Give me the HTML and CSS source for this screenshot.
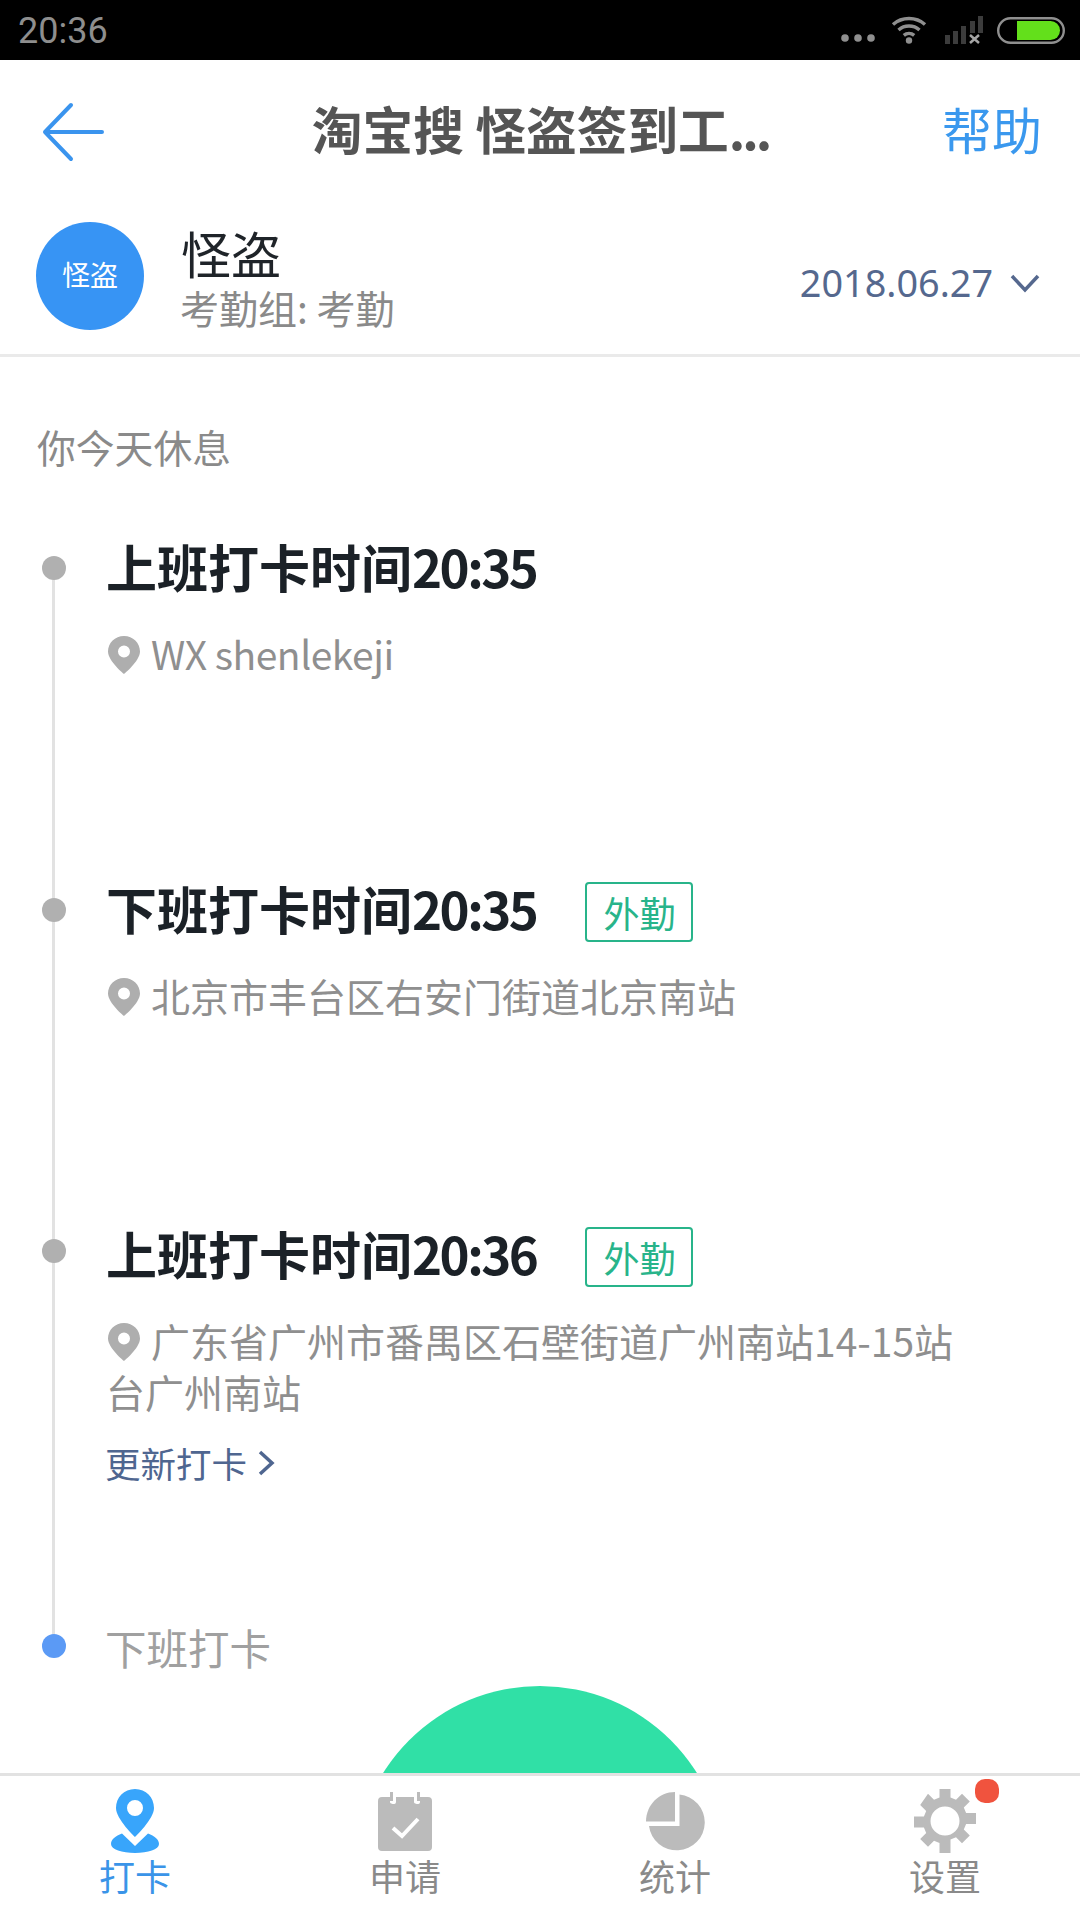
FILE: index.html
```html
<!DOCTYPE html>
<html lang="zh-CN">
<head>
<meta charset="utf-8">
<title>打卡</title>
<link rel="stylesheet" href="styles.css">
</head>
<body>
<div class="page">
  <div class="status">
    <span class="clock">20:36</span>
    <div class="status-icons">
      <svg class="s-dots" width="34" height="10" viewBox="0 0 34 10"><circle cx="4" cy="5" r="3.8"/><circle cx="17" cy="5" r="3.8"/><circle cx="30" cy="5" r="3.8"/></svg>
      <svg class="s-wifi" width="36" height="29" viewBox="0 0 36 29"><path class="w" d="M2 9.5C11 1.5 25 1.500 34 9.500M7.500 15C13.500 9.800 22.500 9.800 28.500 15M12.800 20.300C15.800 17.800 20.200 17.800 23.200 20.300"/><circle cx="18" cy="25.500" r="3.200"/></svg>
      <svg class="s-signal" width="38" height="28" viewBox="0 0 38 28"><g class="sig"><rect x="0" y="19" width="5" height="9"/><rect x="8" y="15" width="5" height="13"/><rect x="16" y="10" width="5" height="18"/><rect x="25" y="5" width="5" height="12"/><rect x="33" y="0" width="5" height="17"/></g><path class="x" d="M25 19l9 8M34 19l-9 8"/></svg>
      <svg class="s-batt" width="68" height="27" viewBox="0 0 68 27"><rect class="b-o" x="1.200" y="1.200" width="65.600" height="24.600" rx="12.300"/><path class="b-f" d="M20 4h33.500a9.500 9.500 0 0 1 0 19H20z"/></svg>
    </div>
  </div>

  <header class="nav">
    <svg class="back" width="62" height="60" viewBox="0 0 62 60"><path d="M60 30H3M29 3L3 30l26 27"/></svg>
    <h1 class="nav-title">淘宝搜 怪盗签到工<span class="more">...</span></h1>
    <span class="nav-help">帮助</span>
  </header>

  <section class="profile">
    <div class="avatar"><span>怪盗</span></div>
    <div class="who">
      <div class="name">怪盗</div>
      <div class="group">考勤组: 考勤</div>
    </div>
    <div class="date">
      <span>2018.06.27</span>
      <svg width="30" height="20" viewBox="0 0 30 20"><path d="M2 3l13 14L28 3"/></svg>
    </div>
  </section>

  <main class="main">
    <p class="notice">你今天休息</p>
    <ol class="timeline">
      <li class="entry e1">
        <div class="head"><h2 class="when">上班打卡时间<span class="clk">20:35</span></h2></div>
        <p class="where"><svg class="pin" width="32" height="38" viewBox="0 0 32 38"><path fill-rule="evenodd" d="M16 0C7 0 0 7 0 15.500 0 25 16 38 16 38s16-13 16-22.500C32 7 25 0 16 0zm0 9.500a6 6 0 1 1 0 12 6 6 0 0 1 0-12z"/></svg><span class="latin">WX shenlekeji</span></p>
      </li>
      <li class="entry e2">
        <div class="head"><h2 class="when">下班打卡时间<span class="clk">20:35</span></h2><span class="tag">外勤</span></div>
        <p class="where"><svg class="pin" width="32" height="38" viewBox="0 0 32 38"><path fill-rule="evenodd" d="M16 0C7 0 0 7 0 15.500 0 25 16 38 16 38s16-13 16-22.500C32 7 25 0 16 0zm0 9.500a6 6 0 1 1 0 12 6 6 0 0 1 0-12z"/></svg>北京市丰台区右安门街道北京南站</p>
      </li>
      <li class="entry e3">
        <div class="head"><h2 class="when">上班打卡时间<span class="clk">20:36</span></h2><span class="tag">外勤</span></div>
        <p class="where"><svg class="pin" width="32" height="38" viewBox="0 0 32 38"><path fill-rule="evenodd" d="M16 0C7 0 0 7 0 15.500 0 25 16 38 16 38s16-13 16-22.500C32 7 25 0 16 0zm0 9.500a6 6 0 1 1 0 12 6 6 0 0 1 0-12z"/></svg>广东省广州市番禺区石壁街道广州南站14-15站台广州南站</p>
        <a class="update">更新打卡<svg width="18" height="28" viewBox="0 0 18 28"><path d="M3 3l12 11L3 25"/></svg></a>
      </li>
      <li class="entry e4 pending">
        <div class="head"><span class="todo">下班打卡</span></div>
      </li>
    </ol>
    <div class="punch"></div>
  </main>

  <nav class="tabs">
    <div class="tab active">
      <svg width="48" height="64" viewBox="0 0 48 64"><path fill-rule="evenodd" d="M24 0C13 0 5 8.500 5 19c0 11 19 29 19 29s19-18 19-29C43 8.500 35 0 24 0zm0 11a8 8 0 1 1 0 16 8 8 0 0 1 0-16z"/><path d="M11 44.500C4.500 47 0 50.500 0 55c0 5.500 11 9 24 9s24-3.500 24-9c0-4.500-4.500-8-11-10.500L24 57z"/></svg>
      <span>打卡</span>
    </div>
    <div class="tab">
      <svg width="54" height="60" viewBox="0 0 54 60"><path fill-rule="evenodd" d="M4 6h8v5c0 2 4 2 4 2s2 0 2-2V6h18v5c0 2 4 2 4 2s2 0 2-2V6h8a4 4 0 0 1 4 4v46a4 4 0 0 1-4 4H4a4 4 0 0 1-4-4V10a4 4 0 0 1 4-4z"/><path class="tick" d="M15 37l9 8 16-17"/><path class="pegs" d="M13.500 1v9M40.500 1v9"/></svg>
      <span>申请</span>
    </div>
    <div class="tab">
      <svg width="60" height="60" viewBox="0 0 60 60"><path d="M30 1v29.500H1C1 14 14 1 30 1z"/><path d="M34.500 3.500A28 28 0 1 1 4 35h30.500z"/></svg>
      <span>统计</span>
    </div>
    <div class="tab">
      <svg width="62" height="64" viewBox="0 0 62 64"><path fill-rule="evenodd" d="M25.500 0h11v8.500l5.500 2.300 6-6 7.800 7.800-6 6 2.300 5.400H62v11h-9.900l-2.300 5.500 6 6-7.800 7.800-6-6-5.500 2.300V64h-11v-9.900L20 51.800l-6 6-7.800-7.800 6-6-2.300-5.500H0v-11h9.900l2.300-5.400-6-6L14 4.800l6 6 5.500-2.300zM31 17.500a14.500 14.500 0 1 0 0 29 14.500 14.500 0 0 0 0-29z"/></svg>
      <span>设置</span>
      <i class="badge"></i>
    </div>
  </nav>
</div>
</body>
</html>
```

FILE: styles.css
```css
* { box-sizing: border-box; }
html, body { margin: 0; padding: 0; }
body { background: #fff; font-family: "Noto Sans CJK SC", "Noto Sans", sans-serif; }
.page { width: 1080px; height: 1920px; display: flex; flex-direction: column; overflow: hidden; }

.status { height: 60px; background: #000; display: flex; align-items: center; justify-content: space-between; padding: 0 15px 0 18px; flex: none; }
.clock { font-family: Roboto, sans-serif; font-size: 36px; color: #8e8e8e; line-height: 60px; padding-top: 2px; }
.status-icons { display: flex; align-items: center; height: 60px; position: relative; }
.s-dots { fill: #8f8f8f; margin: 16px 16px 0 0; }
.s-wifi { fill: #8f8f8f; margin: -1px 18px 0 0; }
.s-wifi .w { fill: none; stroke: #8f8f8f; stroke-width: 3.500; }
.s-signal { margin: 0 14px 0 0; }
.s-signal .sig { fill: #3c3c3c; }
.s-signal .x { stroke: #a5a5a5; stroke-width: 2.500; fill: none; }
.s-batt .b-o { fill: none; stroke: #8f8f8f; stroke-width: 2.400; }
.s-batt .b-f { fill: #63e01b; }

.nav { height: 144px; flex: none; display: flex; align-items: center; padding: 0 38px 0 42px; }
.back { fill: none; stroke: #3a94ee; stroke-width: 4; stroke-linecap: round; stroke-linejoin: round; }
.nav-title { flex: 1; margin: 0 0 8px; text-align: center; font-size: 50.700px; line-height: 60px; font-weight: 700; color: #555; padding-left: 35px; white-space: nowrap; }
.more { letter-spacing: -3px; }
.nav-help { font-size: 50px; line-height: 60px; color: #3a98ee; margin-bottom: 8px; }

.profile { height: 153px; flex: none; display: flex; align-items: center; padding: 0 40px 7px 36px; border-bottom: 3px solid #eaeaea; }
.avatar { width: 108px; height: 108px; border-radius: 50%; background: #3794f4; color: #fff; font-size: 28px; line-height: 40px; padding-bottom: 4px; display: flex; align-items: center; justify-content: center; flex: none; }
.who { margin: 2px 0 0 37px; flex: 1; }
.name { font-size: 50px; line-height: 58px; color: #1f2429; }
.group { font-size: 39px; line-height: 46px; color: #8a8a8a; margin-top: 3px; margin-left: -1px; }
.date { display: flex; align-items: center; gap: 17px; color: #55688e; font-size: 37.800px; font-family: "Noto Sans", sans-serif; margin-top: 14px; }
.date svg { fill: none; stroke: #55688e; stroke-width: 3.500; }

.main { flex: 1; position: relative; overflow: hidden; padding: 0 0 0 36px; }
.notice { margin: 0 0 0 1px; padding-top: 61px; font-size: 38.800px; line-height: 56px; color: #8a8a8a; }

.timeline { list-style: none; margin: 0; padding: 0 0 0 71px; position: relative; }
.timeline::before { content: ""; position: absolute; left: 15.500px; top: 35px; bottom: 0; width: 3px; background: #e2e2e2; }
.entry { position: relative; }
.entry::before { content: ""; position: absolute; left: -65px; width: 24px; height: 24px; border-radius: 50%; background: #b0b0b0; }
.entry.pending::before { background: #5b9af5; }
.e1 { margin-top: 60px; height: 342px; }
.e1::before { top: 22px; }
.e2 { height: 345px; }
.e2::before { top: 22px; }
.e3 { height: 394px; }
.e3::before { top: 18px; }
.e4 { height: 30px; }
.e4::before { top: 19px; }
.head { display: flex; align-items: center; height: 64px; }
.when { margin: 0 0 0 -1px; font-size: 51px; line-height: 64px; font-weight: 700; color: #1b2127; }
.clk { letter-spacing: -2.500px; }
.tag { margin: 7px 0 0 49px; width: 108px; height: 60px; border: 2.500px solid #28b48a; border-radius: 4px; color: #28b48a; font-size: 36px; display: flex; align-items: center; justify-content: center; line-height: 1; }
.where { margin: 30px 0 0 -1px; width: 860px; font-size: 39px; line-height: 51px; color: #8f8f8f; }
.latin { letter-spacing: -0.500px; }
.pin { fill: #aeaeae; vertical-align: -4px; margin: 0 11px 0 2px; }
.update { display: flex; align-items: center; gap: 10px; margin: 21px 0 0 -2px; font-size: 35.500px; line-height: 50px; color: #4f6690; }
.update svg { fill: none; stroke: #4f6690; stroke-width: 3.500; }
.todo { font-size: 41.500px; color: #a0a0a0; line-height: 64px; margin-left: -2px; }

.punch { position: absolute; left: 355px; top: 1329px; width: 370px; height: 370px; border-radius: 50%; background: #30e0a6; }

.tabs { height: 147px; flex: none; display: grid; grid-template-columns: repeat(4, 1fr); border-top: 3px solid #e2e2e2; background: #fff; position: relative; }
.tab { position: relative; display: flex; flex-direction: column; align-items: center; padding-top: 13px; fill: #bbb; color: #8a8a8a; font-size: 36px; }
.tab svg { height: 64px; flex: none; }
.tab span { line-height: 40px; margin-top: 2px; }
.tab.active { fill: #38a5fb; color: #3a94e8; }
.tick { fill: none; stroke: #fff; stroke-width: 4; }
.pegs { fill: none; stroke: #bbb; stroke-width: 3; }
.badge { position: absolute; left: 165px; top: 3px; width: 24px; height: 24px; border-radius: 10px; background: #f0533e; }
```
